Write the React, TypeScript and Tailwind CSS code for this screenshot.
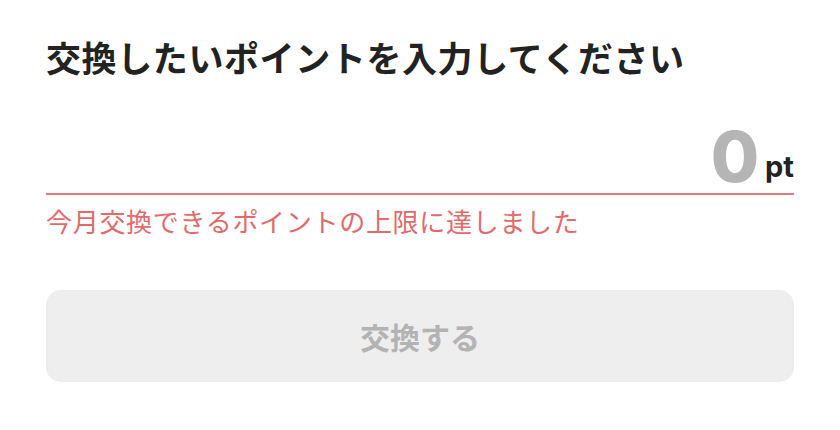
export default function App() {
  return (
    <div
      className="w-[840px] h-[430px] bg-white px-[46px] pt-[33px]"
      style={{ fontFamily: '"Noto Sans CJK JP", "Noto Sans", sans-serif' }}
    >
      <h1 className="text-[35px] leading-[48px] font-bold text-[#222222] tracking-[0.6px]">
        交換したいポイントを入力してください
      </h1>
      <div className="mt-[41px] flex items-end justify-end border-b-2 border-[#e07a7a] pb-[1px]">
        <span
          className="text-[70px] leading-[70px] font-extrabold text-[#b5b5b5]"
          style={{ fontFamily: 'Inter, "Liberation Sans", sans-serif' }}
        >
          0
        </span>
        <span
          className="ml-[6px] mb-[10px] text-[29px] leading-[30px] font-bold text-[#222222]"
          style={{ fontFamily: 'Inter, "Liberation Sans", sans-serif' }}
        >
          pt
        </span>
      </div>
      <p className="mt-[9px] text-[26px] leading-[34px] text-[#e06b6b] tracking-[0.7px]">
        今月交換できるポイントの上限に達しました
      </p>
      <button className="mt-[52px] w-full h-[92px] rounded-[15px] bg-[#eeeeee] text-[30px] font-bold text-[#b3b3b3]">
        交換する
      </button>
    </div>
  );
}
